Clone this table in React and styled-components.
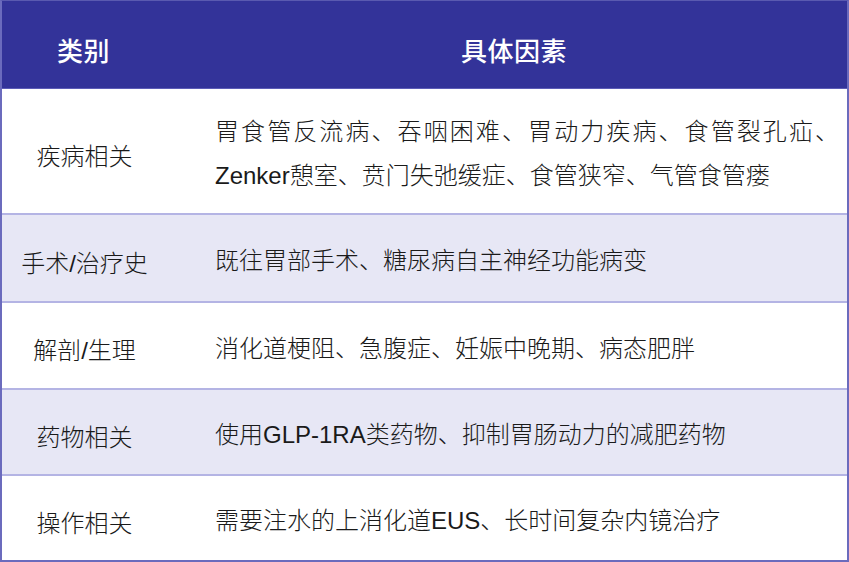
import React from "react";
import styled, { createGlobalStyle } from "styled-components";

const Global = createGlobalStyle`
  html, body { margin: 0; padding: 0; background: #ffffff; }
  body { font-family: "Liberation Sans", "Noto Sans CJK SC", sans-serif; }
`;

const Table = styled.div`
  width: 849px;
  height: 562px;
  box-sizing: border-box;
  border: 2px solid #6b6bbd;
  border-top: 1px solid #5a5ab0;
  display: flex;
  flex-direction: column;
  background: #ffffff;
`;

const Header = styled.div`
  display: grid;
  grid-template-columns: 163px 1fr;
  height: 87px;
  background: #333399;
  border-bottom: 1px solid #5c5cb6;
  color: #ffffff;
  font-size: 26px;
  font-weight: 500;
`;

const HeadCell = styled.div`
  display: flex;
  align-items: center;
  justify-content: center;
  padding-top: 10px;
  padding-left: ${(p) => p.$pl || 0}px;
  padding-right: ${(p) => p.$pr || 0}px;
  letter-spacing: 0.5px;
`;

const Row = styled.div`
  display: grid;
  grid-template-columns: 163px 1fr;
  height: ${(p) => p.$h}px;
  background: ${(p) => (p.$alt ? "#e7e7f5" : "#ffffff")};
  border-top: ${(p) => (p.$first ? "none" : "2px solid #b4b4e4")};
  color: #1a1a1a;
  font-size: 24px;
  font-weight: 300;
`;

const Category = styled.div`
  display: flex;
  align-items: center;
  justify-content: center;
  padding-top: 6px;
  padding-left: 2px;
  white-space: nowrap;
`;

const Factors = styled.div`
  display: flex;
  align-items: center;
  padding: 6px 8px 0 50px;
  line-height: 44px;
`;

const FactorText = styled.p`
  margin: 0;
  text-align: justify;
  width: 100%;
`;

const rows = [
  {
    cat: "疾病相关",
    text: "胃食管反流病、吞咽困难、胃动力疾病、食管裂孔疝、Zenker憩室、贲门失弛缓症、食管狭窄、气管食管瘘",
    h: 124,
  },
  { cat: "手术/治疗史", text: "既往胃部手术、糖尿病自主神经功能病变", h: 86 },
  { cat: "解剖/生理", text: "消化道梗阻、急腹症、妊娠中晚期、病态肥胖", h: 85 },
  { cat: "药物相关", text: "使用GLP-1RA类药物、抑制胃肠动力的减肥药物", h: 84 },
  { cat: "操作相关", text: "需要注水的上消化道EUS、长时间复杂内镜治疗", h: 84 },
];

export default function App() {
  return (
    <>
      <Global />
      <Table>
        <Header>
          <HeadCell>类别</HeadCell>
          <HeadCell $pl={50} $pr={34}>具体因素</HeadCell>
        </Header>
        {rows.map((r, i) => (
          <Row key={r.cat} $h={r.h} $alt={i % 2 === 1} $first={i === 0}>
            <Category>{r.cat}</Category>
            <Factors>
              <FactorText>{r.text}</FactorText>
            </Factors>
          </Row>
        ))}
      </Table>
    </>
  );
}
